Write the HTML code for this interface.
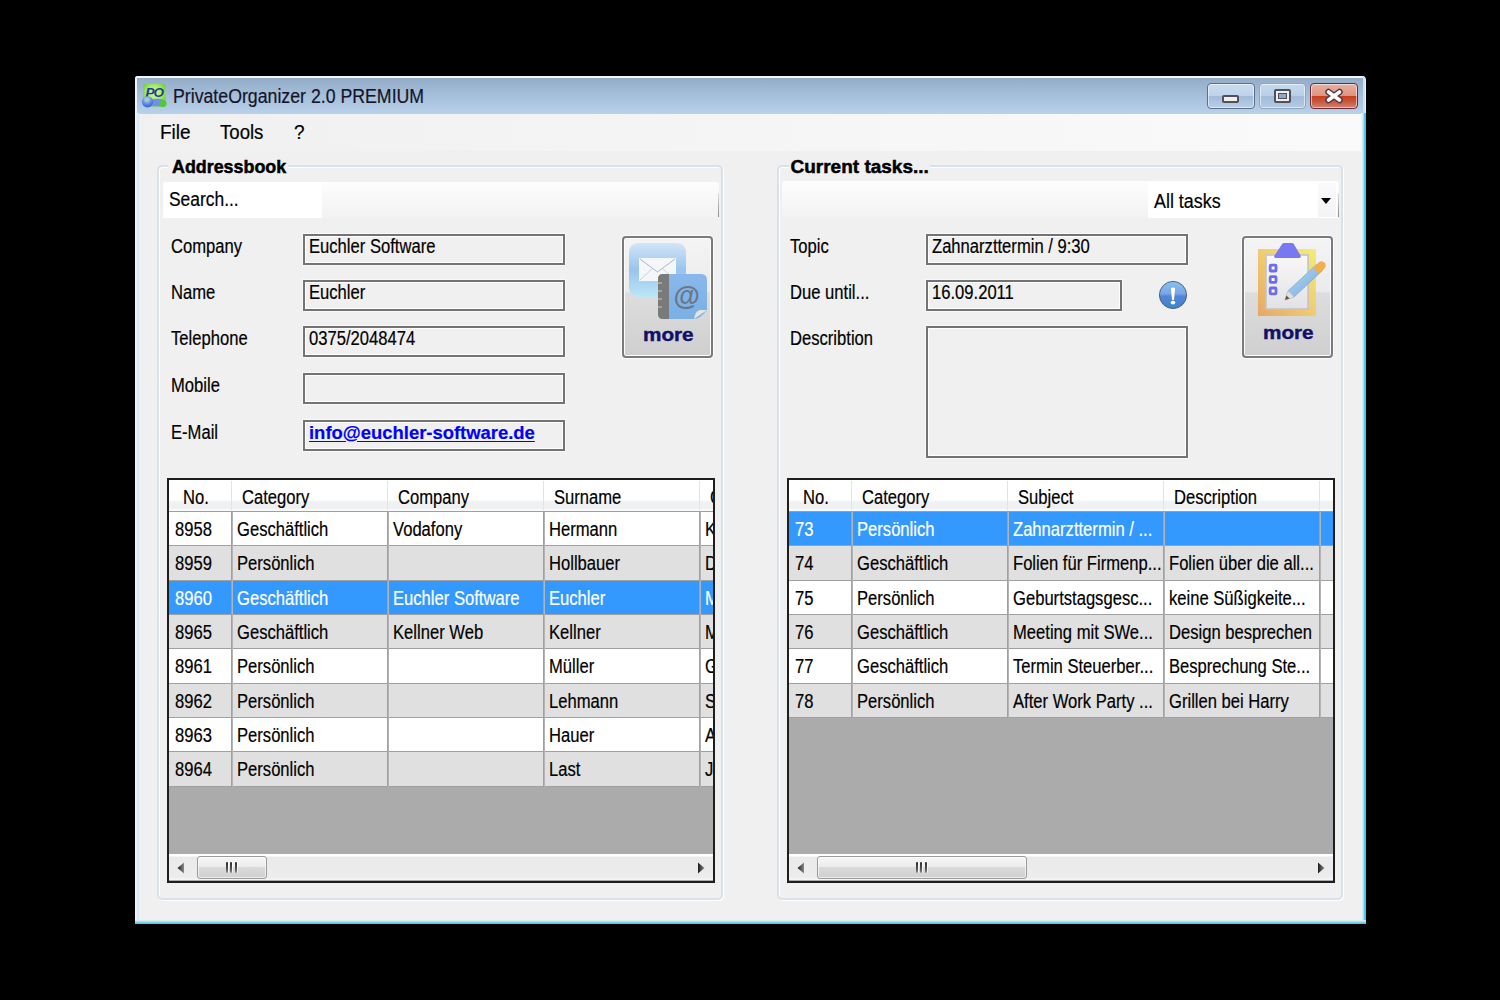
<!DOCTYPE html>
<html><head><meta charset="utf-8"><style>
*{box-sizing:border-box;margin:0;padding:0}
html,body{width:1500px;height:1000px;overflow:hidden;background:#000}
body{position:relative;font-family:"Liberation Sans",sans-serif;color:#000}
.a{position:absolute}
.t{position:absolute;white-space:nowrap;line-height:1;transform-origin:0 0;-webkit-text-stroke:0.2px currentColor}
</style></head><body>
<div class="a" style="left:135px;top:76px;width:1231px;height:848px;background:#f0f0f0;border-radius:4px 4px 0 0"></div>
<div class="a" style="left:135px;top:76px;width:1230px;height:38px;background:linear-gradient(#f4f7fb 0,#f4f7fb 1.5px,#93adca 2.5px,#b9d1ea 100%);border-radius:3px 3px 0 0;box-shadow:inset 2px 0 0 #eef4fa,inset -2px 0 0 #c8e4f6"></div>
<div class="a" style="left:135px;top:113px;width:4px;height:810px;background:linear-gradient(90deg,#f4f8fc,#d7e4f2)"></div>
<div class="a" style="left:1361px;top:113px;width:5px;height:810px;background:linear-gradient(90deg,#eef6fb 0,#cde9f6 40%,#3cc8ec 75%,#30c4ea 100%)"></div>
<div class="a" style="left:135px;top:920px;width:1231px;height:4px;background:linear-gradient(#f4f1f2,#2cc6ea)"></div>
<div class="a" style="left:139px;top:114px;width:1222px;height:37px;background:linear-gradient(90deg,#f0f0f0 0%,#f3f3f3 30%,#fafafa 100%)"></div>
<svg class="a" style="left:141px;top:83px" width="28" height="27" viewBox="0 0 28 27">
<defs><radialGradient id="gi" cx=".5" cy=".4" r=".65"><stop offset="0" stop-color="#dcf8a8"/><stop offset=".55" stop-color="#a6e866"/><stop offset="1" stop-color="#5cc436"/></radialGradient>
<radialGradient id="gl" cx=".45" cy=".3" r=".75"><stop offset="0" stop-color="#c8d8f8"/><stop offset=".5" stop-color="#6a90ec"/><stop offset="1" stop-color="#2a58d0"/></radialGradient></defs>
<rect x="2" y="1" width="22.5" height="22.5" rx="3" fill="url(#gi)"/>
<text x="4.5" y="13.8" font-family="Liberation Sans" font-weight="bold" font-style="italic" font-size="13.5" fill="#1d3f95" letter-spacing="-1">PO</text>
<ellipse cx="16.5" cy="19.5" rx="8.5" ry="3.8" fill="#7090ee"/>
<circle cx="22" cy="20.5" r="3.6" fill="#52c836"/>
<circle cx="6.5" cy="18.8" r="5.6" fill="url(#gl)"/>
<path d="M3.5 16.5 q2.5 -2 4.5 0.5 q-0.5 2.5 -3.5 2 z" fill="#9ad88a" opacity=".85"/>
</svg>
<div class="t" style="left:173.0px;top:86.1px;font-size:20px;color:#141428;transform:scaleX(0.886);">PrivateOrganizer 2.0 PREMIUM</div>
<div class="a" style="left:1207px;top:83px;width:48px;height:26px;background:linear-gradient(#cadcef 0%,#bed3ea 48%,#a3bbd7 52%,#b8cfe8 100%);border:1px solid #5b6f8b;border-radius:4px;box-shadow:inset 0 0 0 1px rgba(255,255,255,.55)"></div>
<div class="a" style="left:1259px;top:83px;width:47px;height:26px;background:linear-gradient(#c5d8ec 0%,#bad0e8 48%,#a3bcd8 52%,#b3cae4 100%);border:1px solid #8ea6c2;border-radius:4px;box-shadow:inset 0 0 0 1px rgba(255,255,255,.55)"></div>
<div class="a" style="left:1310px;top:83px;width:48px;height:26px;background:linear-gradient(#eab0a2 0%,#dd9583 48%,#c4401e 52%,#c85a40 75%,#d88070 100%);border:1px solid #6b2a35;border-radius:4px;box-shadow:inset 0 0 0 1px rgba(255,255,255,.55)"></div>
<div class="a" style="left:1222px;top:95px;width:17px;height:8px;background:#f2efe8;border:2px solid #4e5060;border-radius:2px"></div>
<div class="a" style="left:1274px;top:89px;width:17px;height:14px;border:2px solid #4e5060;background:#f2efe8;border-radius:2px"></div>
<div class="a" style="left:1278px;top:93px;width:9px;height:6px;border:1.5px solid #4e5060;background:#8fa8c8"></div>
<svg class="a" style="left:1323px;top:87px" width="22" height="18" viewBox="0 0 22 18">
<path d="M5.5 5 L16.5 13 M16.5 5 L5.5 13" stroke="#4a3a48" stroke-width="6.4" stroke-linecap="round"/>
<path d="M5.5 5 L16.5 13 M16.5 5 L5.5 13" stroke="#fbfbfb" stroke-width="3.6" stroke-linecap="round"/>
</svg>
<div class="t" style="left:160.0px;top:122.1px;font-size:20px;transform:scaleX(0.95);">File</div>
<div class="t" style="left:220.0px;top:122.1px;font-size:20px;transform:scaleX(0.93);">Tools</div>
<div class="t" style="left:294.0px;top:122.1px;font-size:20px;transform:scaleX(0.95);">?</div>
<div class="a" style="left:157px;top:165px;width:566px;height:735px;border:2px solid #d9e2e9;border-radius:5px;box-shadow:inset 1px 1px 0 #fff,1px 1px 0 #fff"></div>
<div class="a" style="left:777px;top:165px;width:566px;height:735px;border:2px solid #d9e2e9;border-radius:5px;box-shadow:inset 1px 1px 0 #fff,1px 1px 0 #fff"></div>
<div class="a" style="left:168px;top:155px;width:120px;height:22px;background:#f0f0f0"></div>
<div class="a" style="left:789px;top:155px;width:141px;height:22px;background:#f0f0f0"></div>
<div class="t" style="left:171.5px;top:157.4px;font-size:19px;font-weight:bold;transform:scaleX(0.94);-webkit-text-stroke:0.5px #000;">Addressbook</div>
<div class="t" style="left:790.5px;top:157.4px;font-size:19px;font-weight:bold;-webkit-text-stroke:0.5px #000;">Current tasks...</div>
<div class="a" style="left:163px;top:182px;width:556px;height:36px;background:linear-gradient(#fdfdfd,#f2f2f2);border-radius:3px"></div>
<div class="a" style="left:718px;top:193px;width:1px;height:24px;background:linear-gradient(#e0e0e0,#8a8a8a)"></div>
<div class="a" style="left:163px;top:182px;width:159px;height:36px;background:#fff;border-radius:3px 0 0 0"></div>
<div class="t" style="left:169.0px;top:189.1px;font-size:20px;transform:scaleX(0.87);">Search...</div>
<div class="a" style="left:782px;top:181px;width:557px;height:37px;background:linear-gradient(#fdfdfd,#f2f2f2);border-radius:3px"></div>
<div class="a" style="left:1338px;top:193px;width:1px;height:24px;background:linear-gradient(#e0e0e0,#8a8a8a)"></div>
<div class="a" style="left:1148px;top:182px;width:189px;height:36px;background:#fff"></div>
<div class="a" style="left:1318px;top:183px;width:18px;height:34px;background:linear-gradient(#fafafa,#f4f4f4)"></div>
<div class="t" style="left:1153.5px;top:190.6px;font-size:20px;transform:scaleX(0.895);">All tasks</div>
<svg class="a" style="left:1320px;top:197px" width="12" height="8"><path d="M1 1 L11 1 L6 7 Z" fill="#000"/></svg>
<div class="t" style="left:171.0px;top:236.4px;font-size:20px;transform:scaleX(0.83);">Company</div>
<div class="a" style="left:303px;top:234px;width:262px;height:31px;border:2px solid #737373;box-shadow:inset 1px 1px 0 #fff,inset -1px -1px 0 #fff,0 0 0 1px rgba(255,255,255,.6)"></div>
<div class="t" style="left:309.0px;top:236.4px;font-size:20px;transform:scaleX(0.83);">Euchler Software</div>
<div class="t" style="left:171.0px;top:281.7px;font-size:20px;transform:scaleX(0.83);">Name</div>
<div class="a" style="left:303px;top:280px;width:262px;height:31px;border:2px solid #737373;box-shadow:inset 1px 1px 0 #fff,inset -1px -1px 0 #fff,0 0 0 1px rgba(255,255,255,.6)"></div>
<div class="t" style="left:309.0px;top:281.7px;font-size:20px;transform:scaleX(0.83);">Euchler</div>
<div class="t" style="left:171.0px;top:328.3px;font-size:20px;transform:scaleX(0.83);">Telephone</div>
<div class="a" style="left:303px;top:326px;width:262px;height:31px;border:2px solid #737373;box-shadow:inset 1px 1px 0 #fff,inset -1px -1px 0 #fff,0 0 0 1px rgba(255,255,255,.6)"></div>
<div class="t" style="left:309.0px;top:328.3px;font-size:20px;transform:scaleX(0.83);">0375/2048474</div>
<div class="t" style="left:171.0px;top:375.2px;font-size:20px;transform:scaleX(0.83);">Mobile</div>
<div class="a" style="left:303px;top:373px;width:262px;height:31px;border:2px solid #737373;box-shadow:inset 1px 1px 0 #fff,inset -1px -1px 0 #fff,0 0 0 1px rgba(255,255,255,.6)"></div>
<div class="t" style="left:171.0px;top:422.1px;font-size:20px;transform:scaleX(0.83);">E-Mail</div>
<div class="a" style="left:303px;top:420px;width:262px;height:31px;border:2px solid #737373;box-shadow:inset 1px 1px 0 #fff,inset -1px -1px 0 #fff,0 0 0 1px rgba(255,255,255,.6)"></div>
<div class="t" style="left:309.0px;top:422.9px;font-size:19px;font-weight:bold;color:#0000ff;transform:scaleX(0.97);text-decoration:underline;text-underline-offset:2px;">info@euchler-software.de</div>
<div class="t" style="left:790.0px;top:236.4px;font-size:20px;transform:scaleX(0.83);">Topic</div>
<div class="t" style="left:790.0px;top:281.7px;font-size:20px;transform:scaleX(0.83);">Due until...</div>
<div class="t" style="left:790.0px;top:328.3px;font-size:20px;transform:scaleX(0.83);">Describtion</div>
<div class="a" style="left:926px;top:234px;width:262px;height:31px;border:2px solid #737373;box-shadow:inset 1px 1px 0 #fff,inset -1px -1px 0 #fff,0 0 0 1px rgba(255,255,255,.6)"></div>
<div class="t" style="left:932.0px;top:236.4px;font-size:20px;transform:scaleX(0.83);">Zahnarzttermin / 9:30</div>
<div class="a" style="left:926px;top:280px;width:196px;height:31px;border:2px solid #737373;box-shadow:inset 1px 1px 0 #fff,inset -1px -1px 0 #fff,0 0 0 1px rgba(255,255,255,.6)"></div>
<div class="t" style="left:932.0px;top:281.7px;font-size:20px;transform:scaleX(0.83);">16.09.2011</div>
<div class="a" style="left:926px;top:326px;width:262px;height:132px;border:2px solid #737373;box-shadow:inset 1px 1px 0 #fff,inset -1px -1px 0 #fff,0 0 0 1px rgba(255,255,255,.6)"></div>
<svg class="a" style="left:1158px;top:280px" width="30" height="30" viewBox="0 0 30 30">
<defs><linearGradient id="ig" x1="0" y1="0" x2="0" y2="1"><stop offset="0" stop-color="#86c2f0"/><stop offset=".45" stop-color="#7aa6e6"/><stop offset=".55" stop-color="#5585d6"/><stop offset="1" stop-color="#3a86c8"/></linearGradient></defs>
<circle cx="15" cy="15" r="13.6" fill="url(#ig)" stroke="#4a5a70" stroke-width="0.9"/>
<path d="M12.9 8.2 Q15 6.6 17.1 8.2 L16 19.8 Q15 20.6 14 19.8 Z" fill="#fff"/>
<ellipse cx="15" cy="22.6" rx="2.3" ry="1.9" fill="#fff"/>
</svg>
<div class="a" style="left:622px;top:236px;width:91px;height:122px;border:2px solid #7a7a7a;border-radius:4px;background:linear-gradient(#f4f4f4 0%,#ebebeb 45%,#dddddd 47%,#cfcfcf 100%);box-shadow:inset 0 0 0 1px #fcfcfc,0 0 0 1px rgba(255,255,255,.7)"></div>
<div class="a" style="left:1242px;top:236px;width:91px;height:122px;border:2px solid #7a7a7a;border-radius:4px;background:linear-gradient(#f4f4f4 0%,#ebebeb 45%,#dddddd 47%,#cfcfcf 100%);box-shadow:inset 0 0 0 1px #fcfcfc,0 0 0 1px rgba(255,255,255,.7)"></div>
<svg class="a" style="left:628px;top:242px" width="80" height="80" viewBox="0 0 80 80">
<defs><linearGradient id="mg" x1="0" y1="0" x2="0" y2="1"><stop offset="0" stop-color="#d3e5f7"/><stop offset=".5" stop-color="#98c4ee"/><stop offset="1" stop-color="#bde6f5"/></linearGradient>
<linearGradient id="bg2" x1="0" y1="0" x2="0" y2="1"><stop offset="0" stop-color="#89b8ec"/><stop offset="1" stop-color="#7ab0e4"/></linearGradient></defs>
<rect x="1" y="1" width="57" height="54" rx="9" fill="url(#mg)"/>
<rect x="11" y="16" width="37" height="23" fill="#f4f6f8"/>
<path d="M12 17 L29.5 30 L47 17" stroke="#a4bad0" stroke-width="1" fill="none"/>
<path d="M12 38 L24 27 M47 38 L35 27" stroke="#c5d3de" stroke-width="1" fill="none"/>
<path d="M30 37 Q30 32 35 32 L73 32 Q79 32 79 38 L79 68 Q72 77 66 77 L35 77 Q30 77 30 72 Z" fill="url(#bg2)"/>
<path d="M30 37 Q30 32 35 32 L41 32 L41 77 L35 77 Q30 77 30 72 Z" fill="#7a7a7a"/>
<path d="M30 41 h4 M30 49 h4 M30 57 h4 M30 65 h4" stroke="#c8c8c8" stroke-width="1.2"/>
<path d="M66 77 L79 68 L72 68 Q67 69 66 77 Z" fill="#e8e4dc"/>
<text x="45.5" y="63" font-family="Liberation Sans" font-weight="bold" font-size="27" fill="#687888">@</text>
</svg>
<svg class="a" style="left:1255px;top:242px" width="72" height="76" viewBox="0 0 72 76">
<defs><linearGradient id="cb" x1="1" y1="0" x2="0" y2="1"><stop offset="0" stop-color="#f2ec78"/><stop offset=".5" stop-color="#f0cc70"/><stop offset="1" stop-color="#e4a868"/></linearGradient>
<linearGradient id="pp" x1="0" y1="0" x2="0" y2="1"><stop offset="0" stop-color="#f8f8f8"/><stop offset="1" stop-color="#e2e2e6"/></linearGradient>
<linearGradient id="pen" x1="0" y1="0" x2="1" y2="1"><stop offset="0" stop-color="#bcdcf4"/><stop offset="1" stop-color="#6ea6de"/></linearGradient></defs>
<rect x="3" y="7" width="58" height="67" fill="url(#cb)"/>
<rect x="11" y="13" width="42" height="54" fill="url(#pp)" stroke="#c4c4cc" stroke-width="1.6"/>
<path d="M27.5 1.5 Q28 1 29 1 L37 1 Q38 1 38.5 1.5 L45.5 13.5 Q46.5 16 44 16 L21 16 Q18.5 16 19.5 13.5 Z" fill="#7878f0"/>
<rect x="15.2" y="23.2" width="5.8" height="5.8" rx="0.8" fill="#fffbe6" stroke="#6c6cf0" stroke-width="2.8"/>
<rect x="15.2" y="34.6" width="5.8" height="5.8" rx="0.8" fill="#fffbe6" stroke="#6c6cf0" stroke-width="2.8"/>
<rect x="15.2" y="46" width="5.8" height="5.8" rx="0.8" fill="#fffbe6" stroke="#6c6cf0" stroke-width="2.8"/>
<path d="M30 58 L33 49 L62 22 L68 28 L39 55 Z" fill="url(#pen)" stroke="#8aa8c8" stroke-width="0.8"/>
<path d="M58 26 L64 20 Q67 18 70 21 Q72 24 69 27 L64 32 Z" fill="#f0b050"/>
<path d="M30 58 L33 49 L39 55 Z" fill="#e8ddd0"/>
<path d="M30 58 L31.5 53.5 L34.5 56.5 Z" fill="#555"/>
</svg>
<div class="t" style="left:643.0px;top:325.8px;font-size:18px;font-weight:bold;color:#10106a;transform:scaleX(1.15);-webkit-text-stroke:0.4px #10106a;">more</div>
<div class="t" style="left:1263.0px;top:324.4px;font-size:18px;font-weight:bold;color:#10106a;transform:scaleX(1.15);-webkit-text-stroke:0.4px #10106a;">more</div>
<div class="a" style="left:167px;top:478px;width:548px;height:405px;border:2px solid #1e1e1e;background:#ababab"></div>
<div class="a" style="left:169px;top:480px;width:544px;height:400px;overflow:hidden">
<div class="a" style="left:0px;top:0px;width:544px;height:32px;background:linear-gradient(#fff 0%,#fff 62%,#f1f2f4 68%,#eeeff1 88%,#fafafa 92%,#f6f6f6 100%)"></div>
<div class="a" style="left:0px;top:31px;width:544px;height:1px;background:#a0a0a0"></div>
<div class="a" style="left:62px;top:1px;width:1px;height:29px;background:#e2e3e5"></div>
<div class="a" style="left:218px;top:1px;width:1px;height:29px;background:#e2e3e5"></div>
<div class="a" style="left:374px;top:1px;width:1px;height:29px;background:#e2e3e5"></div>
<div class="a" style="left:530px;top:1px;width:1px;height:29px;background:#e2e3e5"></div>
<div class="t" style="left:14.0px;top:7.4px;font-size:20px;transform:scaleX(0.83);">No.</div>
<div class="t" style="left:73.0px;top:7.4px;font-size:20px;transform:scaleX(0.83);">Category</div>
<div class="t" style="left:229.0px;top:7.4px;font-size:20px;transform:scaleX(0.83);">Company</div>
<div class="t" style="left:385.0px;top:7.4px;font-size:20px;transform:scaleX(0.83);">Surname</div>
<div class="t" style="left:541.0px;top:7.4px;font-size:20px;transform:scaleX(0.83);">C</div>
<div class="a" style="left:0px;top:32px;width:544px;height:34px;background:#ffffff"></div>
<div class="a" style="left:0px;top:65px;width:544px;height:1px;background:#a0a0a0"></div>
<div class="a" style="left:62px;top:32px;width:2px;height:34px;background:linear-gradient(90deg,#a0a0a0 50%,#b4b4b4 50%)"></div>
<div class="a" style="left:218px;top:32px;width:2px;height:34px;background:linear-gradient(90deg,#a0a0a0 50%,#b4b4b4 50%)"></div>
<div class="a" style="left:374px;top:32px;width:2px;height:34px;background:linear-gradient(90deg,#a0a0a0 50%,#b4b4b4 50%)"></div>
<div class="a" style="left:530px;top:32px;width:2px;height:34px;background:linear-gradient(90deg,#a0a0a0 50%,#b4b4b4 50%)"></div>
<div class="t" style="left:6.0px;top:39.1px;font-size:20px;transform:scaleX(0.83);">8958</div>
<div class="t" style="left:68.0px;top:39.1px;font-size:20px;transform:scaleX(0.83);">Geschäftlich</div>
<div class="t" style="left:224.0px;top:39.1px;font-size:20px;transform:scaleX(0.83);">Vodafony</div>
<div class="t" style="left:380.0px;top:39.1px;font-size:20px;transform:scaleX(0.83);">Hermann</div>
<div class="t" style="left:536.0px;top:39.1px;font-size:20px;transform:scaleX(0.83);">K</div>
<div class="a" style="left:0px;top:66px;width:544px;height:35px;background:#e0e0e0"></div>
<div class="a" style="left:0px;top:100px;width:544px;height:1px;background:#a0a0a0"></div>
<div class="a" style="left:62px;top:66px;width:2px;height:35px;background:linear-gradient(90deg,#a0a0a0 50%,#b4b4b4 50%)"></div>
<div class="a" style="left:218px;top:66px;width:2px;height:35px;background:linear-gradient(90deg,#a0a0a0 50%,#b4b4b4 50%)"></div>
<div class="a" style="left:374px;top:66px;width:2px;height:35px;background:linear-gradient(90deg,#a0a0a0 50%,#b4b4b4 50%)"></div>
<div class="a" style="left:530px;top:66px;width:2px;height:35px;background:linear-gradient(90deg,#a0a0a0 50%,#b4b4b4 50%)"></div>
<div class="t" style="left:6.0px;top:73.1px;font-size:20px;transform:scaleX(0.83);">8959</div>
<div class="t" style="left:68.0px;top:73.1px;font-size:20px;transform:scaleX(0.83);">Persönlich</div>
<div class="t" style="left:380.0px;top:73.1px;font-size:20px;transform:scaleX(0.83);">Hollbauer</div>
<div class="t" style="left:536.0px;top:73.1px;font-size:20px;transform:scaleX(0.83);">D</div>
<div class="a" style="left:0px;top:101px;width:544px;height:34px;background:#3399ff"></div>
<div class="a" style="left:0px;top:134px;width:544px;height:1px;background:#a0a0a0"></div>
<div class="a" style="left:62px;top:101px;width:2px;height:34px;background:linear-gradient(90deg,#a0a0a0 50%,#b4b4b4 50%)"></div>
<div class="a" style="left:218px;top:101px;width:2px;height:34px;background:linear-gradient(90deg,#a0a0a0 50%,#b4b4b4 50%)"></div>
<div class="a" style="left:374px;top:101px;width:2px;height:34px;background:linear-gradient(90deg,#a0a0a0 50%,#b4b4b4 50%)"></div>
<div class="a" style="left:530px;top:101px;width:2px;height:34px;background:linear-gradient(90deg,#a0a0a0 50%,#b4b4b4 50%)"></div>
<div class="t" style="left:6.0px;top:108.1px;font-size:20px;color:#fff;transform:scaleX(0.83);">8960</div>
<div class="t" style="left:68.0px;top:108.1px;font-size:20px;color:#fff;transform:scaleX(0.83);">Geschäftlich</div>
<div class="t" style="left:224.0px;top:108.1px;font-size:20px;color:#fff;transform:scaleX(0.83);">Euchler Software</div>
<div class="t" style="left:380.0px;top:108.1px;font-size:20px;color:#fff;transform:scaleX(0.83);">Euchler</div>
<div class="t" style="left:536.0px;top:108.1px;font-size:20px;color:#fff;transform:scaleX(0.83);">M</div>
<div class="a" style="left:0px;top:135px;width:544px;height:34px;background:#e0e0e0"></div>
<div class="a" style="left:0px;top:168px;width:544px;height:1px;background:#a0a0a0"></div>
<div class="a" style="left:62px;top:135px;width:2px;height:34px;background:linear-gradient(90deg,#a0a0a0 50%,#b4b4b4 50%)"></div>
<div class="a" style="left:218px;top:135px;width:2px;height:34px;background:linear-gradient(90deg,#a0a0a0 50%,#b4b4b4 50%)"></div>
<div class="a" style="left:374px;top:135px;width:2px;height:34px;background:linear-gradient(90deg,#a0a0a0 50%,#b4b4b4 50%)"></div>
<div class="a" style="left:530px;top:135px;width:2px;height:34px;background:linear-gradient(90deg,#a0a0a0 50%,#b4b4b4 50%)"></div>
<div class="t" style="left:6.0px;top:142.1px;font-size:20px;transform:scaleX(0.83);">8965</div>
<div class="t" style="left:68.0px;top:142.1px;font-size:20px;transform:scaleX(0.83);">Geschäftlich</div>
<div class="t" style="left:224.0px;top:142.1px;font-size:20px;transform:scaleX(0.83);">Kellner Web</div>
<div class="t" style="left:380.0px;top:142.1px;font-size:20px;transform:scaleX(0.83);">Kellner</div>
<div class="t" style="left:536.0px;top:142.1px;font-size:20px;transform:scaleX(0.83);">M</div>
<div class="a" style="left:0px;top:169px;width:544px;height:35px;background:#ffffff"></div>
<div class="a" style="left:0px;top:203px;width:544px;height:1px;background:#a0a0a0"></div>
<div class="a" style="left:62px;top:169px;width:2px;height:35px;background:linear-gradient(90deg,#a0a0a0 50%,#b4b4b4 50%)"></div>
<div class="a" style="left:218px;top:169px;width:2px;height:35px;background:linear-gradient(90deg,#a0a0a0 50%,#b4b4b4 50%)"></div>
<div class="a" style="left:374px;top:169px;width:2px;height:35px;background:linear-gradient(90deg,#a0a0a0 50%,#b4b4b4 50%)"></div>
<div class="a" style="left:530px;top:169px;width:2px;height:35px;background:linear-gradient(90deg,#a0a0a0 50%,#b4b4b4 50%)"></div>
<div class="t" style="left:6.0px;top:176.1px;font-size:20px;transform:scaleX(0.83);">8961</div>
<div class="t" style="left:68.0px;top:176.1px;font-size:20px;transform:scaleX(0.83);">Persönlich</div>
<div class="t" style="left:380.0px;top:176.1px;font-size:20px;transform:scaleX(0.83);">Müller</div>
<div class="t" style="left:536.0px;top:176.1px;font-size:20px;transform:scaleX(0.83);">G</div>
<div class="a" style="left:0px;top:204px;width:544px;height:34px;background:#e0e0e0"></div>
<div class="a" style="left:0px;top:237px;width:544px;height:1px;background:#a0a0a0"></div>
<div class="a" style="left:62px;top:204px;width:2px;height:34px;background:linear-gradient(90deg,#a0a0a0 50%,#b4b4b4 50%)"></div>
<div class="a" style="left:218px;top:204px;width:2px;height:34px;background:linear-gradient(90deg,#a0a0a0 50%,#b4b4b4 50%)"></div>
<div class="a" style="left:374px;top:204px;width:2px;height:34px;background:linear-gradient(90deg,#a0a0a0 50%,#b4b4b4 50%)"></div>
<div class="a" style="left:530px;top:204px;width:2px;height:34px;background:linear-gradient(90deg,#a0a0a0 50%,#b4b4b4 50%)"></div>
<div class="t" style="left:6.0px;top:211.1px;font-size:20px;transform:scaleX(0.83);">8962</div>
<div class="t" style="left:68.0px;top:211.1px;font-size:20px;transform:scaleX(0.83);">Persönlich</div>
<div class="t" style="left:380.0px;top:211.1px;font-size:20px;transform:scaleX(0.83);">Lehmann</div>
<div class="t" style="left:536.0px;top:211.1px;font-size:20px;transform:scaleX(0.83);">S</div>
<div class="a" style="left:0px;top:238px;width:544px;height:34px;background:#ffffff"></div>
<div class="a" style="left:0px;top:271px;width:544px;height:1px;background:#a0a0a0"></div>
<div class="a" style="left:62px;top:238px;width:2px;height:34px;background:linear-gradient(90deg,#a0a0a0 50%,#b4b4b4 50%)"></div>
<div class="a" style="left:218px;top:238px;width:2px;height:34px;background:linear-gradient(90deg,#a0a0a0 50%,#b4b4b4 50%)"></div>
<div class="a" style="left:374px;top:238px;width:2px;height:34px;background:linear-gradient(90deg,#a0a0a0 50%,#b4b4b4 50%)"></div>
<div class="a" style="left:530px;top:238px;width:2px;height:34px;background:linear-gradient(90deg,#a0a0a0 50%,#b4b4b4 50%)"></div>
<div class="t" style="left:6.0px;top:245.1px;font-size:20px;transform:scaleX(0.83);">8963</div>
<div class="t" style="left:68.0px;top:245.1px;font-size:20px;transform:scaleX(0.83);">Persönlich</div>
<div class="t" style="left:380.0px;top:245.1px;font-size:20px;transform:scaleX(0.83);">Hauer</div>
<div class="t" style="left:536.0px;top:245.1px;font-size:20px;transform:scaleX(0.83);">A</div>
<div class="a" style="left:0px;top:272px;width:544px;height:35px;background:#e0e0e0"></div>
<div class="a" style="left:0px;top:306px;width:544px;height:1px;background:#a0a0a0"></div>
<div class="a" style="left:62px;top:272px;width:2px;height:35px;background:linear-gradient(90deg,#a0a0a0 50%,#b4b4b4 50%)"></div>
<div class="a" style="left:218px;top:272px;width:2px;height:35px;background:linear-gradient(90deg,#a0a0a0 50%,#b4b4b4 50%)"></div>
<div class="a" style="left:374px;top:272px;width:2px;height:35px;background:linear-gradient(90deg,#a0a0a0 50%,#b4b4b4 50%)"></div>
<div class="a" style="left:530px;top:272px;width:2px;height:35px;background:linear-gradient(90deg,#a0a0a0 50%,#b4b4b4 50%)"></div>
<div class="t" style="left:6.0px;top:279.1px;font-size:20px;transform:scaleX(0.83);">8964</div>
<div class="t" style="left:68.0px;top:279.1px;font-size:20px;transform:scaleX(0.83);">Persönlich</div>
<div class="t" style="left:380.0px;top:279.1px;font-size:20px;transform:scaleX(0.83);">Last</div>
<div class="t" style="left:536.0px;top:279.1px;font-size:20px;transform:scaleX(0.83);">J</div>
<div class="a" style="left:0px;top:374px;width:544px;height:27px;background:linear-gradient(#fff 0,#fff 2px,#eaeaea 3px,#ececec 85%,#f4f4f4 93%,#fafafa 100%)"></div>
<svg class="a" style="left:6px;top:381px" width="12" height="14"><defs><linearGradient id="al167" x1="0" y1="0" x2="1" y2="0"><stop offset="0" stop-color="#1a1a1a"/><stop offset="1" stop-color="#8a8a8a"/></linearGradient></defs><path d="M9 1.5 L2.5 7 L9 12.5 Z" fill="url(#al167)"/></svg>
<svg class="a" style="left:526px;top:381px" width="12" height="14"><defs><linearGradient id="ar167" x1="0" y1="0" x2="1" y2="0"><stop offset="0" stop-color="#1a1a1a"/><stop offset="1" stop-color="#8a8a8a"/></linearGradient></defs><path d="M3 1.5 L9.5 7 L3 12.5 Z" fill="url(#ar167)"/></svg>
<div class="a" style="left:28px;top:376px;width:70px;height:23px;border:1px solid #9a9a9a;border-radius:3px;background:linear-gradient(#f6f6f6 0%,#ececec 45%,#dadada 50%,#d0d0d0 100%);box-shadow:inset 0 0 0 1px rgba(255,255,255,.6)"></div>
<div class="a" style="left:57px;top:382px;width:2px;height:11px;background:linear-gradient(#2a2a2a,#5a5a5a 70%,#9a9a9a);border-radius:1px;box-shadow:1px 0 0 rgba(255,255,255,.7)"></div>
<div class="a" style="left:61px;top:382px;width:2px;height:11px;background:linear-gradient(#2a2a2a,#5a5a5a 70%,#9a9a9a);border-radius:1px;box-shadow:1px 0 0 rgba(255,255,255,.7)"></div>
<div class="a" style="left:66px;top:382px;width:2px;height:11px;background:linear-gradient(#2a2a2a,#5a5a5a 70%,#9a9a9a);border-radius:1px;box-shadow:1px 0 0 rgba(255,255,255,.7)"></div>
</div>
<div class="a" style="left:787px;top:478px;width:548px;height:405px;border:2px solid #1e1e1e;background:#ababab"></div>
<div class="a" style="left:789px;top:480px;width:544px;height:400px;overflow:hidden">
<div class="a" style="left:0px;top:0px;width:544px;height:32px;background:linear-gradient(#fff 0%,#fff 62%,#f1f2f4 68%,#eeeff1 88%,#fafafa 92%,#f6f6f6 100%)"></div>
<div class="a" style="left:0px;top:31px;width:544px;height:1px;background:#a0a0a0"></div>
<div class="a" style="left:62px;top:1px;width:1px;height:29px;background:#e2e3e5"></div>
<div class="a" style="left:218px;top:1px;width:1px;height:29px;background:#e2e3e5"></div>
<div class="a" style="left:374px;top:1px;width:1px;height:29px;background:#e2e3e5"></div>
<div class="a" style="left:530px;top:1px;width:1px;height:29px;background:#e2e3e5"></div>
<div class="t" style="left:14.0px;top:7.4px;font-size:20px;transform:scaleX(0.83);">No.</div>
<div class="t" style="left:73.0px;top:7.4px;font-size:20px;transform:scaleX(0.83);">Category</div>
<div class="t" style="left:229.0px;top:7.4px;font-size:20px;transform:scaleX(0.83);">Subject</div>
<div class="t" style="left:385.0px;top:7.4px;font-size:20px;transform:scaleX(0.83);">Description</div>
<div class="t" style="left:541.0px;top:7.4px;font-size:20px;transform:scaleX(0.83);"></div>
<div class="a" style="left:0px;top:32px;width:544px;height:34px;background:#3399ff"></div>
<div class="a" style="left:0px;top:65px;width:544px;height:1px;background:#a0a0a0"></div>
<div class="a" style="left:62px;top:32px;width:2px;height:34px;background:linear-gradient(90deg,#a0a0a0 50%,#b4b4b4 50%)"></div>
<div class="a" style="left:218px;top:32px;width:2px;height:34px;background:linear-gradient(90deg,#a0a0a0 50%,#b4b4b4 50%)"></div>
<div class="a" style="left:374px;top:32px;width:2px;height:34px;background:linear-gradient(90deg,#a0a0a0 50%,#b4b4b4 50%)"></div>
<div class="a" style="left:530px;top:32px;width:2px;height:34px;background:linear-gradient(90deg,#a0a0a0 50%,#b4b4b4 50%)"></div>
<div class="t" style="left:6.0px;top:39.1px;font-size:20px;color:#fff;transform:scaleX(0.83);">73</div>
<div class="t" style="left:68.0px;top:39.1px;font-size:20px;color:#fff;transform:scaleX(0.83);">Persönlich</div>
<div class="t" style="left:224.0px;top:39.1px;font-size:20px;color:#fff;transform:scaleX(0.83);">Zahnarzttermin / ...</div>
<div class="a" style="left:0px;top:66px;width:544px;height:35px;background:#e0e0e0"></div>
<div class="a" style="left:0px;top:100px;width:544px;height:1px;background:#a0a0a0"></div>
<div class="a" style="left:62px;top:66px;width:2px;height:35px;background:linear-gradient(90deg,#a0a0a0 50%,#b4b4b4 50%)"></div>
<div class="a" style="left:218px;top:66px;width:2px;height:35px;background:linear-gradient(90deg,#a0a0a0 50%,#b4b4b4 50%)"></div>
<div class="a" style="left:374px;top:66px;width:2px;height:35px;background:linear-gradient(90deg,#a0a0a0 50%,#b4b4b4 50%)"></div>
<div class="a" style="left:530px;top:66px;width:2px;height:35px;background:linear-gradient(90deg,#a0a0a0 50%,#b4b4b4 50%)"></div>
<div class="t" style="left:6.0px;top:73.1px;font-size:20px;transform:scaleX(0.83);">74</div>
<div class="t" style="left:68.0px;top:73.1px;font-size:20px;transform:scaleX(0.83);">Geschäftlich</div>
<div class="t" style="left:224.0px;top:73.1px;font-size:20px;transform:scaleX(0.83);">Folien für Firmenp...</div>
<div class="t" style="left:380.0px;top:73.1px;font-size:20px;transform:scaleX(0.83);">Folien über die all...</div>
<div class="a" style="left:0px;top:101px;width:544px;height:34px;background:#ffffff"></div>
<div class="a" style="left:0px;top:134px;width:544px;height:1px;background:#a0a0a0"></div>
<div class="a" style="left:62px;top:101px;width:2px;height:34px;background:linear-gradient(90deg,#a0a0a0 50%,#b4b4b4 50%)"></div>
<div class="a" style="left:218px;top:101px;width:2px;height:34px;background:linear-gradient(90deg,#a0a0a0 50%,#b4b4b4 50%)"></div>
<div class="a" style="left:374px;top:101px;width:2px;height:34px;background:linear-gradient(90deg,#a0a0a0 50%,#b4b4b4 50%)"></div>
<div class="a" style="left:530px;top:101px;width:2px;height:34px;background:linear-gradient(90deg,#a0a0a0 50%,#b4b4b4 50%)"></div>
<div class="t" style="left:6.0px;top:108.1px;font-size:20px;transform:scaleX(0.83);">75</div>
<div class="t" style="left:68.0px;top:108.1px;font-size:20px;transform:scaleX(0.83);">Persönlich</div>
<div class="t" style="left:224.0px;top:108.1px;font-size:20px;transform:scaleX(0.83);">Geburtstagsgesc...</div>
<div class="t" style="left:380.0px;top:108.1px;font-size:20px;transform:scaleX(0.83);">keine Süßigkeite...</div>
<div class="a" style="left:0px;top:135px;width:544px;height:34px;background:#e0e0e0"></div>
<div class="a" style="left:0px;top:168px;width:544px;height:1px;background:#a0a0a0"></div>
<div class="a" style="left:62px;top:135px;width:2px;height:34px;background:linear-gradient(90deg,#a0a0a0 50%,#b4b4b4 50%)"></div>
<div class="a" style="left:218px;top:135px;width:2px;height:34px;background:linear-gradient(90deg,#a0a0a0 50%,#b4b4b4 50%)"></div>
<div class="a" style="left:374px;top:135px;width:2px;height:34px;background:linear-gradient(90deg,#a0a0a0 50%,#b4b4b4 50%)"></div>
<div class="a" style="left:530px;top:135px;width:2px;height:34px;background:linear-gradient(90deg,#a0a0a0 50%,#b4b4b4 50%)"></div>
<div class="t" style="left:6.0px;top:142.1px;font-size:20px;transform:scaleX(0.83);">76</div>
<div class="t" style="left:68.0px;top:142.1px;font-size:20px;transform:scaleX(0.83);">Geschäftlich</div>
<div class="t" style="left:224.0px;top:142.1px;font-size:20px;transform:scaleX(0.83);">Meeting mit SWe...</div>
<div class="t" style="left:380.0px;top:142.1px;font-size:20px;transform:scaleX(0.83);">Design besprechen</div>
<div class="a" style="left:0px;top:169px;width:544px;height:35px;background:#ffffff"></div>
<div class="a" style="left:0px;top:203px;width:544px;height:1px;background:#a0a0a0"></div>
<div class="a" style="left:62px;top:169px;width:2px;height:35px;background:linear-gradient(90deg,#a0a0a0 50%,#b4b4b4 50%)"></div>
<div class="a" style="left:218px;top:169px;width:2px;height:35px;background:linear-gradient(90deg,#a0a0a0 50%,#b4b4b4 50%)"></div>
<div class="a" style="left:374px;top:169px;width:2px;height:35px;background:linear-gradient(90deg,#a0a0a0 50%,#b4b4b4 50%)"></div>
<div class="a" style="left:530px;top:169px;width:2px;height:35px;background:linear-gradient(90deg,#a0a0a0 50%,#b4b4b4 50%)"></div>
<div class="t" style="left:6.0px;top:176.1px;font-size:20px;transform:scaleX(0.83);">77</div>
<div class="t" style="left:68.0px;top:176.1px;font-size:20px;transform:scaleX(0.83);">Geschäftlich</div>
<div class="t" style="left:224.0px;top:176.1px;font-size:20px;transform:scaleX(0.83);">Termin Steuerber...</div>
<div class="t" style="left:380.0px;top:176.1px;font-size:20px;transform:scaleX(0.83);">Besprechung Ste...</div>
<div class="a" style="left:0px;top:204px;width:544px;height:34px;background:#e0e0e0"></div>
<div class="a" style="left:0px;top:237px;width:544px;height:1px;background:#a0a0a0"></div>
<div class="a" style="left:62px;top:204px;width:2px;height:34px;background:linear-gradient(90deg,#a0a0a0 50%,#b4b4b4 50%)"></div>
<div class="a" style="left:218px;top:204px;width:2px;height:34px;background:linear-gradient(90deg,#a0a0a0 50%,#b4b4b4 50%)"></div>
<div class="a" style="left:374px;top:204px;width:2px;height:34px;background:linear-gradient(90deg,#a0a0a0 50%,#b4b4b4 50%)"></div>
<div class="a" style="left:530px;top:204px;width:2px;height:34px;background:linear-gradient(90deg,#a0a0a0 50%,#b4b4b4 50%)"></div>
<div class="t" style="left:6.0px;top:211.1px;font-size:20px;transform:scaleX(0.83);">78</div>
<div class="t" style="left:68.0px;top:211.1px;font-size:20px;transform:scaleX(0.83);">Persönlich</div>
<div class="t" style="left:224.0px;top:211.1px;font-size:20px;transform:scaleX(0.83);">After Work Party ...</div>
<div class="t" style="left:380.0px;top:211.1px;font-size:20px;transform:scaleX(0.83);">Grillen bei Harry</div>
<div class="a" style="left:0px;top:374px;width:544px;height:27px;background:linear-gradient(#fff 0,#fff 2px,#eaeaea 3px,#ececec 85%,#f4f4f4 93%,#fafafa 100%)"></div>
<svg class="a" style="left:6px;top:381px" width="12" height="14"><defs><linearGradient id="al787" x1="0" y1="0" x2="1" y2="0"><stop offset="0" stop-color="#1a1a1a"/><stop offset="1" stop-color="#8a8a8a"/></linearGradient></defs><path d="M9 1.5 L2.5 7 L9 12.5 Z" fill="url(#al787)"/></svg>
<svg class="a" style="left:526px;top:381px" width="12" height="14"><defs><linearGradient id="ar787" x1="0" y1="0" x2="1" y2="0"><stop offset="0" stop-color="#1a1a1a"/><stop offset="1" stop-color="#8a8a8a"/></linearGradient></defs><path d="M3 1.5 L9.5 7 L3 12.5 Z" fill="url(#ar787)"/></svg>
<div class="a" style="left:28px;top:376px;width:210px;height:23px;border:1px solid #9a9a9a;border-radius:3px;background:linear-gradient(#f6f6f6 0%,#ececec 45%,#dadada 50%,#d0d0d0 100%);box-shadow:inset 0 0 0 1px rgba(255,255,255,.6)"></div>
<div class="a" style="left:127px;top:382px;width:2px;height:11px;background:linear-gradient(#2a2a2a,#5a5a5a 70%,#9a9a9a);border-radius:1px;box-shadow:1px 0 0 rgba(255,255,255,.7)"></div>
<div class="a" style="left:131px;top:382px;width:2px;height:11px;background:linear-gradient(#2a2a2a,#5a5a5a 70%,#9a9a9a);border-radius:1px;box-shadow:1px 0 0 rgba(255,255,255,.7)"></div>
<div class="a" style="left:136px;top:382px;width:2px;height:11px;background:linear-gradient(#2a2a2a,#5a5a5a 70%,#9a9a9a);border-radius:1px;box-shadow:1px 0 0 rgba(255,255,255,.7)"></div>
</div>
</body></html>
